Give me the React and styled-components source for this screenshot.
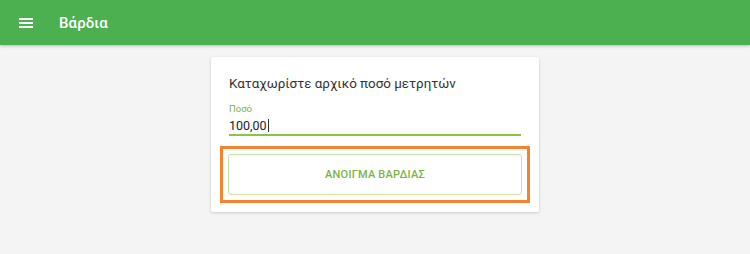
import React from "react";
import styled, { createGlobalStyle } from "styled-components";

const GlobalStyle = createGlobalStyle`
  html, body {
    margin: 0;
    padding: 0;
    background: #f4f4f4;
    font-family: Roboto, "Noto Sans", "Liberation Sans", sans-serif;
  }
`;

const Page = styled.div`
  width: 750px;
  height: 254px;
  background: #f4f4f4;
  overflow: hidden;
`;

const Toolbar = styled.header`
  height: 45px;
  background: #4caf50;
  display: flex;
  align-items: center;
  padding-left: 19px;
  box-shadow: 0 1px 3px rgba(0, 0, 0, 0.25);
  position: relative;
`;

const MenuButton = styled.div`
  width: 14px;
  height: 10px;
  display: flex;
  flex-direction: column;
  justify-content: space-between;
  margin-top: 1px;

  & > span {
    display: block;
    height: 2px;
    background: #fff;
  }
`;

const Title = styled.h1`
  margin: 0 0 0 26px;
  color: #fff;
  font-size: 15px;
  font-weight: 500;
  letter-spacing: 0.1px;
`;

const Content = styled.main`
  display: flex;
  justify-content: center;
  padding-top: 12px;
`;

const Card = styled.section`
  width: 328px;
  box-sizing: border-box;
  background: #fff;
  border-radius: 2px;
  box-shadow: 0 1px 3px rgba(0, 0, 0, 0.18);
  padding: 19px 18px 9px;
`;

const Heading = styled.p`
  margin: 0;
  font-size: 13.4px;
  color: #333;
  line-height: 16px;
`;

const Field = styled.div`
  margin-top: 11px;
  border-bottom: 2px solid #8bc34a;
  padding-bottom: 1px;
`;

const Label = styled.label`
  display: block;
  font-size: 9.5px;
  color: #7cb342;
  line-height: 12px;
`;

const Value = styled.div`
  margin-top: 3px;
  font-size: 12.5px;
  color: #222;
  line-height: 15px;
  display: flex;
  align-items: center;
`;

const Caret = styled.span`
  display: inline-block;
  width: 1px;
  height: 13px;
  background: #333;
  margin-left: 1px;
`;

const FocusRing = styled.div`
  margin: 10px -9px 0;
  border: 3px solid #f5822f;
  padding: 5px;
`;

const OpenButton = styled.button`
  display: block;
  width: 100%;
  height: 41px;
  background: #fff;
  border: 1px solid #c5e1a5;
  border-radius: 3px;
  color: #7cb342;
  font-family: inherit;
  font-size: 11px;
  font-weight: 500;
  letter-spacing: 0.2px;
  outline: none;
`;

export default function App() {
  return (
    <Page>
      <GlobalStyle />
      <Toolbar>
        <MenuButton>
          <span />
          <span />
          <span />
        </MenuButton>
        <Title>Βάρδια</Title>
      </Toolbar>
      <Content>
        <Card>
          <Heading>Καταχωρίστε αρχικό ποσό μετρητών</Heading>
          <Field>
            <Label>Ποσό</Label>
            <Value>
              100,00
              <Caret />
            </Value>
          </Field>
          <FocusRing>
            <OpenButton>ΑΝΟΙΓΜΑ ΒΑΡΔΙΑΣ</OpenButton>
          </FocusRing>
        </Card>
      </Content>
    </Page>
  );
}
